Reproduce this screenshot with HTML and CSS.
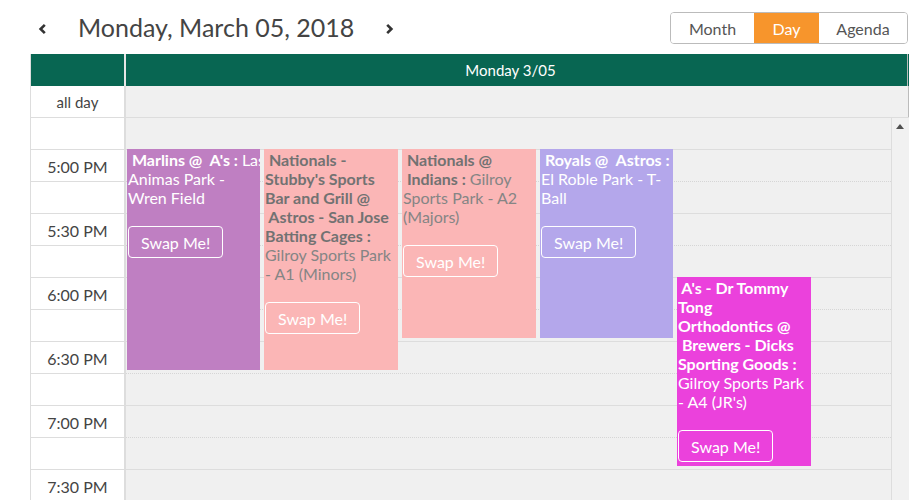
FILE: index.html
```html
<!DOCTYPE html>
<html lang="en">
<head>
<meta charset="utf-8">
<title>Day view</title>
<link rel="stylesheet" href="styles.css">
</head>
<body>
<div class="toolbar">
  <div class="nav">
    <button class="chev" aria-label="Previous"><svg width="9" height="12" viewBox="0 0 9 12"><path d="M6.8 1.8 L2.6 6 L6.8 10.2" fill="none" stroke="#333" stroke-width="2.6"/></svg></button>
    <h2 class="title">Monday, March 05, 2018</h2>
    <button class="chev" aria-label="Next"><svg width="9" height="12" viewBox="0 0 9 12"><path d="M2.2 1.8 L6.4 6 L2.2 10.2" fill="none" stroke="#333" stroke-width="2.6"/></svg></button>
  </div>
  <div class="views">
    <button class="view">Month</button>
    <button class="view active">Day</button>
    <button class="view">Agenda</button>
  </div>
</div>

<div class="cal">
  <div class="head">
    <div class="axis"></div>
    <div class="dayhead">Monday 3/05</div>
  </div>
  <div class="allday">
    <div class="axis">all day</div>
    <div class="daycell"></div>
  </div>
  <div class="body">
    <div class="times">
      <div class="slot"></div>
      <div class="slot">5:00 PM</div>
      <div class="slot"></div>
      <div class="slot">5:30 PM</div>
      <div class="slot"></div>
      <div class="slot">6:00 PM</div>
      <div class="slot"></div>
      <div class="slot">6:30 PM</div>
      <div class="slot"></div>
      <div class="slot">7:00 PM</div>
      <div class="slot"></div>
      <div class="slot">7:30 PM</div>
    </div>
    <div class="daycol">
      <div class="row"></div>
      <div class="row minor"></div>
      <div class="row"></div>
      <div class="row minor"></div>
      <div class="row"></div>
      <div class="row minor"></div>
      <div class="row"></div>
      <div class="row minor"></div>
      <div class="row"></div>
      <div class="row minor"></div>
      <div class="row"></div>
      <div class="row minor"></div>

      <div class="event purple" style="left:1px;top:31px;height:221px">
        <div class="nowrap"><b>&nbsp;Marlins @ &nbsp;A's : </b>Las</div>Animas Park - Wren Field
        <div><button class="swap">Swap Me!</button></div>
      </div>
      <div class="event pink" style="left:138px;top:31px;height:221px">
        <b>&nbsp;Nationals - Stubby's Sports Bar and Grill @ &nbsp;Astros - San Jose Batting Cages : </b>Gilroy Sports Park - A1 (Minors)
        <div><button class="swap">Swap Me!</button></div>
      </div>
      <div class="event pink" style="left:276px;top:31px;height:189px">
        <b>&nbsp;Nationals @ &nbsp;Indians : </b>Gilroy Sports Park - A2 (Majors)
        <div><button class="swap">Swap Me!</button></div>
      </div>
      <div class="event lavender" style="left:414px;top:31px;height:189px">
        <b>&nbsp;Royals @ &nbsp;Astros : </b>El Roble Park - T-Ball
        <div><button class="swap">Swap Me!</button></div>
      </div>
      <div class="event magenta" style="left:551px;top:159px;height:189px">
        <b>&nbsp;A's - Dr Tommy Tong Orthodontics @ &nbsp;Brewers - Dicks Sporting Goods : </b>Gilroy Sports Park - A4 (JR's)
        <div><button class="swap">Swap Me!</button></div>
      </div>
    </div>
    <div class="scrollbar"><span class="arrow"></span></div>
  </div>
</div>
</body>
</html>
```

FILE: styles.css
```css
html, body {
  margin: 0;
  padding: 0;
  overflow: hidden;
  background: #fff;
}
body {
  font-family: Lato, "Open Sans", sans-serif;
  color: #444;
  width: 923px;
  height: 500px;
}
button {
  font-family: inherit;
}

.toolbar {
  height: 54px;
  display: flex;
  justify-content: space-between;
  align-items: flex-start;
  padding: 0 15px 0 36px;
  box-sizing: border-box;
}
.nav {
  display: flex;
  align-items: center;
  height: 54px;
}
.chev {
  border: 0;
  background: none;
  padding: 0;
  width: 12px;
  height: 20px;
  display: flex;
  align-items: center;
  justify-content: center;
  margin-top: 4px;
}
.title {
  margin: 0 29px 0 30px;
  font-size: 25px;
  font-weight: 400;
  color: #444;
}
.views {
  display: flex;
  margin-top: 12px;
  border: 1px solid #bbb;
  border-radius: 4px;
  overflow: hidden;
  height: 32px;
  box-sizing: border-box;
}
.view {
  border: 0;
  background: #fff;
  color: #555;
  font-size: 16px;
  padding: 0 10px;
  height: 30px;
}
.view:first-child { width: 83px; }
.view.active {
  background: #f7952c;
  color: #fff;
  width: 65px;
}
.view:last-child { width: 88px; }

.cal {
  margin-left: 30px;
  width: 879px;
  border-left: 1px solid #ddd;
  box-sizing: border-box;
}
.head {
  display: flex;
  height: 32px;
  background: #086652;
  color: #fff;
}
.head .axis {
  width: 93px;
  border-right: 2px solid #e6e6e6;
}
.dayhead {
  width: 782px;
  border-right: 1px solid #bbb;
  display: flex;
  align-items: center;
  justify-content: center;
  font-size: 15px;
  padding-right: 12px;
  box-sizing: border-box;
}
.allday {
  display: flex;
  height: 32px;
  border-bottom: 1px solid #ddd;
  box-sizing: border-box;
}
.allday .axis {
  width: 93px;
  border-right: 2px solid #ddd;
  display: flex;
  align-items: center;
  justify-content: center;
  font-size: 15px;
  color: #444;
}
.daycell {
  width: 782px;
  background: #f0f0f0;
  border-right: 1px solid #bbb;
}

.body {
  display: flex;
  height: 382px;
  overflow: hidden;
}
.times {
  width: 93px;
  border-right: 2px solid #ddd;
  flex: none;
}
.slot {
  height: 32px;
  box-sizing: border-box;
  border-bottom: 1px solid #ddd;
  display: flex;
  align-items: center;
  justify-content: center;
  font-size: 16px;
  color: #444;
  padding-top: 1px;
}
.daycol {
  position: relative;
  width: 766px;
  flex: none;
  background: #f0f0f0;
  border-right: 1px solid #ddd;
  box-sizing: border-box;
}
.row {
  height: 32px;
  box-sizing: border-box;
  border-bottom: 1px solid #ddd;
}
.row.minor {
  border-bottom: 1px dotted #d6d6d6;
}
.scrollbar {
  width: 17px;
  flex: none;
  background: #f1f1f1;
  position: relative;
}
.arrow {
  position: absolute;
  top: 6px;
  left: 4px;
  width: 0;
  height: 0;
  border-left: 4px solid transparent;
  border-right: 4px solid transparent;
  border-bottom: 5px solid #505050;
}

.event {
  position: absolute;
  width: 134px;
  box-sizing: border-box;
  padding: 1px 0 0 1px;
  font-size: 16px;
  line-height: 19px;
  overflow: hidden;
  color: #fff;
}
.event b { font-weight: 700; }
.nowrap { white-space: nowrap; overflow: hidden; }
.purple { background: #bf7fc2; width: 133px; }
.pink { background: #fbb6b6; color: #858585; }
.pink b { color: #727272; }
.lavender { background: #b4a7eb; width: 133px; }
.magenta { background: #eb41dc; }
.swap {
  margin-top: 19px;
  height: 32px;
  padding: 0 12px;
  border: 1px solid #fff;
  border-radius: 4px;
  background: transparent;
  color: #fff;
  font-size: 16px;
}
```
